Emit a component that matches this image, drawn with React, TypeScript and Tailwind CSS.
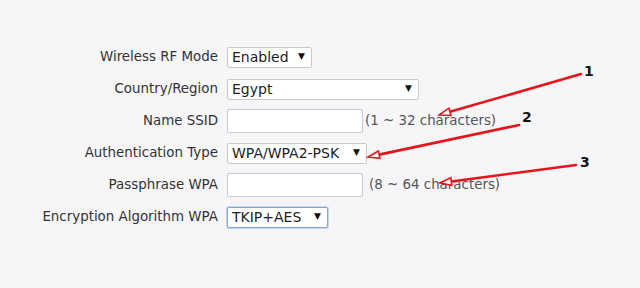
import React from 'react'

const rows = [
  { label: 'Wireless RF Mode', kind: 'select', value: 'Enabled', w: 'w-[85px]' },
  { label: 'Country/Region', kind: 'select', value: 'Egypt', w: 'w-[192px]' },
  { label: 'Name SSID', kind: 'input', note: '(1 ~ 32 characters)', gap: 'ml-[2px]' },
  { label: 'Authentication Type', kind: 'select', value: 'WPA/WPA2-PSK', w: 'w-[140px]' },
  { label: 'Passphrase WPA', kind: 'input', note: '(8 ~ 64 characters)', gap: 'ml-[6px]' },
  { label: 'Encryption Algorithm WPA', kind: 'select', value: 'TKIP+AES', w: 'w-[101px]', focus: true },
]

const Select = (prop: any) => {
  const { value, w, focus } = prop
  return (
    <div
      className={`${w} h-[21px] bg-white flex items-center justify-between pl-[4px] pr-[6px] rounded-[2px] border ${
        focus ? 'border-[#7fa6d8] shadow-[0_0_0_1px_#c4d6ee]' : 'border-[#c9c9c9]'
      }`}
    >
      <span className="text-[14px] text-[#222] leading-none">{value}</span>
      <span className="text-[9px] text-[#111]">▼</span>
    </div>
  )
}

const Arrow = (prop: any) => {
  const { x1, y1, x2, y2, n, nx, ny } = prop
  const ang = Math.atan2(y1 - y2, x1 - x2)
  const len = 12
  const spread = 0.32
  const ax = x2 + len * Math.cos(ang + spread)
  const ay = y2 + len * Math.sin(ang + spread)
  const bx = x2 + len * Math.cos(ang - spread)
  const by = y2 + len * Math.sin(ang - spread)
  return (
    <>
      <line x1={x1} y1={y1} x2={(ax + bx) / 2} y2={(ay + by) / 2} stroke="#e8141a" strokeWidth={2.6} strokeLinecap="round" />
      <polygon points={`${x2},${y2} ${ax},${ay} ${bx},${by}`} fill="#fff" stroke="#e8141a" strokeWidth={1.6} />
      <text x={nx} y={ny} fontSize={14} fontWeight={700} fill="#111" fontFamily="'DejaVu Sans', sans-serif">
        {n}
      </text>
    </>
  )
}

const App = () => {
  return (
    <div className="relative w-[640px] h-[288px] bg-[#f6f5f8] overflow-hidden font-['DejaVu_Sans',sans-serif]">
      <div className="grid grid-cols-[218px_auto] gap-x-[9px] pt-[41px]">
        {rows.map((r) => (
          <React.Fragment key={r.label}>
            <div className="h-[32px] flex items-center justify-end text-[13.4px] text-[#333] whitespace-nowrap">
              {r.label}
            </div>
            <div className="h-[32px] flex items-center">
              {r.kind === 'select' ? (
                <Select value={r.value} w={r.w} focus={r.focus} />
              ) : (
                <>
                  <div className="w-[136px] h-[24px] bg-white border border-[#c6cbd3] rounded-[2px]" />
                  <span className={`${r.gap} text-[13.4px] text-[#555]`}>{r.note}</span>
                </>
              )}
            </div>
          </React.Fragment>
        ))}
      </div>
      <svg className="absolute inset-0 pointer-events-none" width={640} height={288}>
        <Arrow x1={581} y1={74} x2={439} y2={115} n="1" nx={584} ny={76} />
        <Arrow x1={519} y1={125} x2={368} y2={157} n="2" nx={522} ny={122} />
        <Arrow x1={576} y1={165} x2={440} y2={183} n="3" nx={580} ny={167} />
      </svg>
    </div>
  )
}

export default App
